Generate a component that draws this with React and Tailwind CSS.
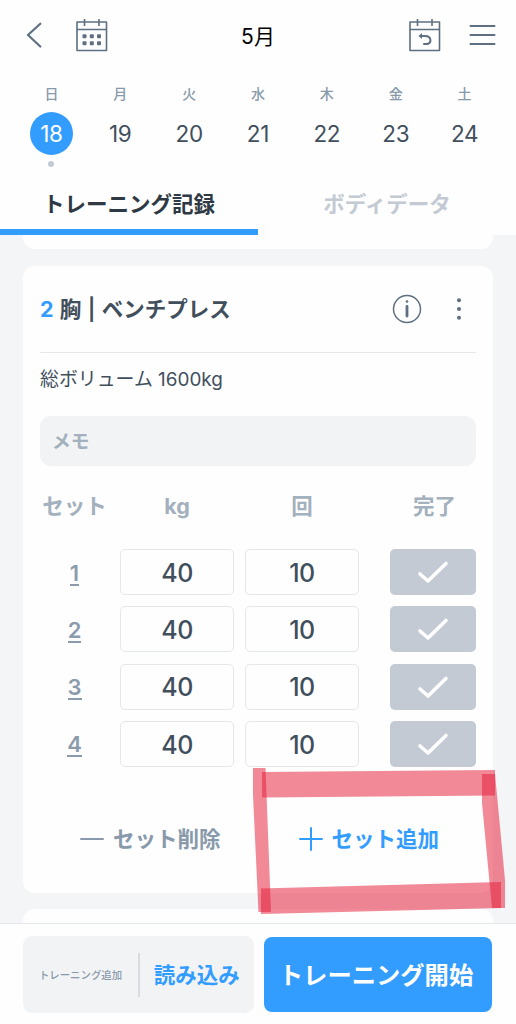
import { useState } from "react";

const days = [
  { label: "日", date: 18 },
  { label: "月", date: 19 },
  { label: "火", date: 20 },
  { label: "水", date: 21 },
  { label: "木", date: 22 },
  { label: "金", date: 23 },
  { label: "土", date: 24 },
];

const sets = [
  { id: 1, kg: 40, reps: 10 },
  { id: 2, kg: 40, reps: 10 },
  { id: 3, kg: 40, reps: 10 },
  { id: 4, kg: 40, reps: 10 },
];

function CalendarIcon({ children }) {
  return (
    <svg width="32" height="34" viewBox="0 0 32 34" fill="none" stroke="#5d6f80" strokeWidth="1.6" strokeLinejoin="round">
      <rect x="1" y="4" width="29.5" height="28.5" />
      <path d="M1 11.5h29.5M8.5 1v7M23 1v7" />
      {children}
    </svg>
  );
}

function Header() {
  return (
    <div className="flex h-[70px] items-center justify-between pl-[26px] pr-5">
      <div className="flex w-[130px] items-center gap-[34px]">
        <svg width="16" height="26" viewBox="0 0 16 26" fill="none" stroke="#5d6f80" strokeWidth="2.2" strokeLinecap="round" strokeLinejoin="round">
          <path d="M14.3 1.7 2 13l12.3 11.5" />
        </svg>
        <CalendarIcon>
          <g fill="#5d6f80" stroke="none">
            <rect x="6.5" y="16.3" width="4" height="4" rx="1" />
            <rect x="13.8" y="16.3" width="4" height="4" rx="1" />
            <rect x="21" y="16.3" width="4" height="4" rx="1" />
            <rect x="6.5" y="23.3" width="4" height="4" rx="1" />
            <rect x="13.8" y="23.3" width="4" height="4" rx="1" />
            <rect x="21" y="23.3" width="4" height="4" rx="1" />
          </g>
        </CalendarIcon>
      </div>
      <h1 className="pt-[3px] text-[21px] leading-none text-black">5月</h1>
      <div className="flex w-[136px] items-center justify-end gap-7">
        <CalendarIcon>
          <path d="M11.5 18H16c7 0 7 8 1.5 8H15" strokeWidth="2" strokeLinecap="round" />
          <path d="m13 15-3.500 3 3.500 3z" fill="#5d6f80" stroke="none" />
        </CalendarIcon>
        <svg width="27" height="22" viewBox="0 0 27 22" stroke="#5d6f80" strokeWidth="2" strokeLinecap="round">
          <path d="M1.5 2h24M1.5 11h24M1.5 20h24" />
        </svg>
      </div>
    </div>
  );
}

function SetRow({ set, done, onToggle }) {
  return (
    <div className="flex h-[46px] items-center">
      <div className="flex w-[69px] justify-center pt-[3px] text-[22px] font-semibold text-[#8b9bac]">
        <span className="border-b-2 border-[#8b9bac] leading-[22px]">{set.id}</span>
      </div>
      <div className="ml-[11px] flex h-full w-[114px] items-center justify-center rounded-[5px] border border-[#e4e8eb] pt-[3px] text-[25px] font-medium tracking-[-0.5px]">
        {set.kg}
      </div>
      <div className="ml-[11px] flex h-full w-[114px] items-center justify-center rounded-[5px] border border-[#e4e8eb] pt-[3px] text-[25px] font-medium tracking-[-0.5px]">
        {set.reps}
      </div>
      <button
        onClick={onToggle}
        className={`ml-auto flex h-full w-[86px] items-center justify-center rounded-[5px] ${
          done ? "bg-[#339dff]" : "bg-[#c3cad4]"
        }`}
      >
        <svg width="32" height="24" viewBox="0 0 32 24" fill="none" stroke="white" strokeWidth="3.6" strokeLinecap="round" strokeLinejoin="round">
          <path d="m3 14 8 7L29 3.500" />
        </svg>
      </button>
    </div>
  );
}

// marker strokes around the add button
function Marker() {
  return (
    <svg className="pointer-events-none absolute top-[760px] left-[245px]" width="271" height="160" viewBox="245 760 271 160" fill="#e4203a" fillOpacity="0.53">
      <path d="M262 772 495 770V795.5L262 797.5Z" />
      <path d="M253 768H265.5L271 912H258.5L253 795Z" />
      <path d="M482 774H495L505 880V908H492L482 803Z" />
      <path d="M261 888.5 501 882V908L261 914Z" />
    </svg>
  );
}

export default function App() {
  const [done, setDone] = useState([]);

  const toggle = (id) =>
    setDone(done.includes(id) ? done.filter((d) => d !== id) : [...done, id]);

  return (
    <div className="relative flex h-[1024px] w-[516px] flex-col overflow-hidden bg-[#f4f5f7] font-[Inter,'Noto_Sans_CJK_JP',sans-serif] text-[#414f5d]">
      {/* HEADER */}
      <div className="h-[235px] shrink-0 bg-[#fefefe]">
        <Header />
        <div className="flex h-[110px] px-[17px]">
          {days.map((d, i) => (
            <div key={d.date} className="flex flex-1 flex-col items-center pt-4">
              <span className="text-[14px] leading-4 font-medium text-[#8799aa]">{d.label}</span>
              <span
                className={`mt-[10px] flex size-[43px] items-center justify-center rounded-full pt-px text-[22.5px] tracking-[-0.3px] ${
                  i === 0 ? "bg-[#339dff] text-white" : ""
                }`}
              >
                {d.date}
              </span>
              {i === 0 && <span className="mt-[6px] size-[6px] rounded-full bg-[#c3cad4]" />}
            </div>
          ))}
        </div>
        <div className="flex h-[55px] text-[21.5px] font-bold">
          <div className="flex flex-1 items-center justify-center border-b-6 border-[#339dff] text-[#2e3944]">
            トレーニング記録
          </div>
          <div className="flex flex-1 items-center justify-center border-b-6 border-transparent text-[#c3cad4]">
            ボディデータ
          </div>
        </div>
      </div>

      {/* CARDS */}
      <div className="flex min-h-0 flex-1 flex-col overflow-hidden px-[23px]">
        <div className="h-[14px] shrink-0 rounded-b-[12px] bg-[#fefefe]" />
        <div className="mt-[17px] h-[627px] shrink-0 rounded-[12px] bg-[#fefefe] px-[17px]">
          <div className="flex h-[87px] items-center border-b border-[#e4e7eb]">
            <h2 className="flex-1 text-[21.5px] font-bold [word-spacing:1.2px]">
              <span className="text-[#339dff]">2</span> 胸 <span className="font-semibold">|</span> ベンチプレス
            </h2>
            <svg width="30" height="30" viewBox="0 0 30 30" fill="none" stroke="#5d6f80" strokeLinecap="round">
              <circle cx="15" cy="15" r="13.5" strokeWidth="1.5" />
              <path d="M15 12.500v9.500" strokeWidth="2.8" />
              <circle cx="15" cy="7.5" r="1.300" fill="#5d6f80" stroke="none" />
            </svg>
            <svg className="mr-3 ml-[32px]" width="10" height="24" viewBox="0 0 10 24" fill="#5d6f80">
              <circle cx="5" cy="3.3" r="2" />
              <circle cx="5" cy="12" r="2" />
              <circle cx="5" cy="20.7" r="2" />
            </svg>
          </div>
          <p className="mt-[13px] text-[18.9px] leading-7">総ボリューム 1600kg</p>
          <div className="mt-[22px] flex h-[50px] items-center rounded-[11px] bg-[#f2f3f5] px-3 pt-[2px] text-[18.7px] font-bold text-[#a3b0bd]">
            メモ
          </div>
          <div className="mt-6 flex h-8 items-center text-center text-[21.5px] font-bold text-[#a3b0bd]">
            <span className="w-[69px]">セット</span>
            <span className="ml-[11px] w-[114px]">kg</span>
            <span className="ml-[11px] w-[114px]">回</span>
            <span className="ml-auto w-[83px]">完了</span>
          </div>
          <div className="mt-[27px] flex flex-col gap-[11.3px]">
            {sets.map((s) => (
              <SetRow key={s.id} set={s} done={done.includes(s.id)} onToggle={() => toggle(s.id)} />
            ))}
          </div>
          <div className="mt-[56px] flex h-8 items-center text-[21.5px] font-bold">
            <button className="ml-10 flex items-center gap-[9px] text-[#8799aa]">
              <svg width="24" height="24" viewBox="0 0 24 24" stroke="currentColor" strokeWidth="2" strokeLinecap="round">
                <path d="M1 12h22" />
              </svg>
              セット削除
            </button>
            <button className="ml-[78px] flex items-center gap-[9px] text-[#339dff]">
              <svg width="24" height="24" viewBox="0 0 24 24" stroke="currentColor" strokeWidth="2" strokeLinecap="round">
                <path d="M1 12h22M12 1v22" />
              </svg>
              セット追加
            </button>
          </div>
        </div>
        <div className="mt-4 h-10 shrink-0 rounded-t-[12px] bg-[#fefefe]" />
      </div>

      {/* BOTTOM BAR */}
      <div className="flex h-[101px] shrink-0 gap-[10px] border-t border-[#e4e7eb] bg-[#fefefe] pt-3 pr-6 pl-[23px]">
        <div className="flex h-[77px] w-[231px] items-center rounded-[9px] bg-[#f2f3f5]">
          <button className="w-[115px] pt-[2px] text-[10.4px] font-medium text-[#8799aa]">トレーニング追加</button>
          <div className="h-11 w-[1.5px] bg-[#d9dde2]" />
          <button className="flex-1 pt-[2px] text-[21.5px] font-bold text-[#339dff]">読み込み</button>
        </div>
        <button className="mt-px h-[75px] flex-1 rounded-[8px] bg-[#339dff] pt-[2px] pr-1 text-[24.3px] font-bold whitespace-nowrap text-white">
          トレーニング開始
        </button>
      </div>

      <Marker />
    </div>
  );
}
